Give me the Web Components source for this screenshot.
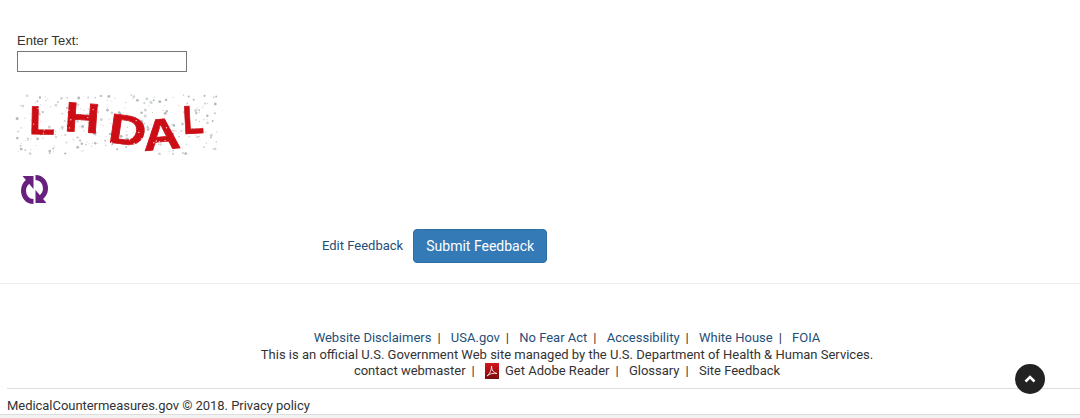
<!DOCTYPE html>
<html lang="en">
<head>
<meta charset="utf-8">
<title>Feedback</title>
<style>
	html, body { margin: 0; padding: 0; background: #fff; }
	body { font: 13px/17px Roboto, "Liberation Sans", sans-serif; color: #333; height: 418px; overflow: hidden; position: relative; }
</style>
</head>
<body>
	<feedback-form></feedback-form>
	<site-footer>
		<footer-row>
			<footer-link href="#" kind="link">Website Disclaimers</footer-link>
			<footer-link href="#" kind="link">USA.gov</footer-link>
			<footer-link href="#" kind="link">No Fear Act</footer-link>
			<footer-link href="#" kind="link">Accessibility</footer-link>
			<footer-link href="#" kind="link">White House</footer-link>
			<footer-link href="#" kind="link" last>FOIA</footer-link>
		</footer-row>
		<footer-row>This is an official U.S. Government Web site managed by the U.S. Department of Health &amp; Human Services.</footer-row>
		<footer-row>
			<footer-link href="#">contact webmaster</footer-link>
			<footer-link href="#" pdf>Get Adobe Reader</footer-link>
			<footer-link href="#">Glossary</footer-link>
			<footer-link href="#" last>Site Feedback</footer-link>
		</footer-row>
	</site-footer>
	<back-to-top></back-to-top>

<script>
const captchaTemplate = document.createElement('template')
captchaTemplate.innerHTML = `
	<style>
		:host { display: block; width: 200px; height: 60px; }
		svg { display: block; overflow: visible; }
		text { font: bold 40px "Liberation Sans", Arial, sans-serif; fill: #cd0e14; stroke: #cd0e14; stroke-width: .7px; }
	</style>
	<svg width="200" height="60" viewBox="0 0 200 60">
		<defs><filter id="soft" x="0" y="0" width="100%" height="100%"><feGaussianBlur stdDeviation="0.35"/></filter></defs>
		<g filter="url(#soft)">
			<g id="dots"></g>
			<text transform="translate(12 39) rotate(1) scale(1.05 1)">L</text>
			<text transform="translate(47 36) rotate(4) scale(1.2 1.05)">H</text>
			<text transform="translate(90 47) rotate(8) scale(1.3 1.05)">D</text>
			<text transform="translate(127 56) rotate(-5) scale(1.3 1.1)">A</text>
			<text transform="translate(166.500 39) rotate(-3) scale(.85 1)">L</text>
			<g id="over"></g>
		</g>
	</svg>
`

class CaptchaImage extends HTMLElement {
	constructor() {
		super()
		this.attachShadow({ mode: 'open' })
		this.shadowRoot.appendChild(captchaTemplate.content.cloneNode(true))
		// the noise of the captcha, always the same
		let seed = 41
		const rnd = () => (seed = (seed * 16807) % 2147483647) / 2147483647
		const ns = 'http://www.w3.org/2000/svg'
		const dots = this.shadowRoot.getElementById('dots')
		for (let i = 0; i < 260; i++) {
			const c = document.createElementNS(ns, 'circle')
			c.setAttribute('cx', (rnd() * 200).toFixed(1))
			c.setAttribute('cy', (rnd() * 60).toFixed(1))
			c.setAttribute('r', (0.4 + rnd() * 1.1).toFixed(1))
			c.setAttribute('fill', rnd() > .5 ? '#b3babd' : '#d0d4d6')
			dots.appendChild(c)
		}
		const over = this.shadowRoot.getElementById('over')
		for (let i = 0; i < 70; i++) {
			const c = document.createElementNS(ns, 'circle')
			c.setAttribute('cx', (12 + rnd() * 180).toFixed(1))
			c.setAttribute('cy', (10 + rnd() * 45).toFixed(1))
			c.setAttribute('r', '0.7')
			c.setAttribute('fill', '#f3d6d6')
			over.appendChild(c)
		}
	}
}

const feedbackTemplate = document.createElement('template')
feedbackTemplate.innerHTML = `
	<style>
		:host { display: block; padding: 32px 0 19px 17px; border-bottom: 1px solid #eee; height: 232px; }
		label { display: block; height: 19px; color: #333; font-family: "Liberation Sans", Arial, sans-serif; }
		input { display: block; box-sizing: border-box; width: 170px; height: 21px; margin: 0; padding: 0 2px; border: 1px solid #767676; background: #fff; }
		captcha-image { margin-top: 23px; }
		.refresh { display: block; width: 27px; height: 29px; margin: 20px 0 0 4px; }
		.refresh svg { display: block; }
		.actions { display: flex; align-items: center; gap: 10px; margin: 25px 0 0 305px; }
		.actions a { padding-bottom: 2px; }
		a { color: #1f4e79; text-decoration: none; }
		button { box-sizing: border-box; width: 134px; height: 34px; padding: 0; font: 14px Roboto, "Liberation Sans", sans-serif; color: #fff; background: #337ab7; border: 1px solid #2e6da4; border-radius: 4px; }
	</style>
	<label for="txt">Enter Text:</label>
	<input id="txt" type="text">
	<captcha-image></captcha-image>
	<a class="refresh" href="#" aria-label="Refresh">
		<svg width="27" height="29" viewBox="0 0 27 29">
			<g fill="none" stroke="#68207f" stroke-width="5">
				<path d="M12.500 26.500 C6 26.500 2.500 21 2.500 15.500 C2.500 11.500 4 9 7 6.500"/>
				<path d="M14.500 2.500 C21 2.500 24.500 8 24.500 13.500 C24.500 17.500 23 20 20 22.500"/>
			</g>
			<path fill="#68207f" d="M1.500 1 L12.500 1 L12.500 14 Z"/>
			<path fill="#68207f" d="M25.500 28 L14.500 28 L14.500 15 Z"/>
		</svg>
	</a>
	<div class="actions">
		<a href="#">Edit Feedback</a>
		<button type="button">Submit Feedback</button>
	</div>
`

class FeedbackForm extends HTMLElement {
	constructor() {
		super()
		this.attachShadow({ mode: 'open' })
		this.shadowRoot.appendChild(feedbackTemplate.content.cloneNode(true))
	}
}

const footerTemplate = document.createElement('template')
footerTemplate.innerHTML = `
	<style>
		:host { display: block; padding-top: 45px; }
		.links { padding: 0 0 9px 54px; text-align: center; }
		.copy { margin-left: 7px; padding-top: 8px; height: 17px; border-top: 1px solid #ddd; color: #333; letter-spacing: -.04px; }
		.copy a { color: inherit; text-decoration: none; }
		.band { height: 4px; margin-top: 0; background: #f2f2f2; border-top: 1px solid #ddd; box-sizing: border-box; }
	</style>
	<div class="links"><slot></slot></div>
	<div class="copy">MedicalCountermeasures.gov © 2018. <a href="#">Privacy policy</a></div>
	<div class="band"></div>
`

class SiteFooter extends HTMLElement {
	constructor() {
		super()
		this.attachShadow({ mode: 'open' })
		this.shadowRoot.appendChild(footerTemplate.content.cloneNode(true))
	}
}

class FooterRow extends HTMLElement {
	constructor() {
		super()
		this.attachShadow({ mode: 'open' })
		this.shadowRoot.innerHTML = `
			<style>:host { display: block; height: 16.5px; line-height: 17px; white-space: nowrap; }</style>
			<slot></slot>
		`
	}
}

class FooterLink extends HTMLElement {
	constructor() {
		super()
		this.attachShadow({ mode: 'open' })
		const color = this.getAttribute('kind') === 'link' ? '#1f4e79' : '#333'
		const pdf = this.hasAttribute('pdf') ? `
			<svg width="14" height="16" viewBox="0 0 14 16">
				<defs><linearGradient id="g" x1="0" y1="0" x2="0" y2="1"><stop offset="0" stop-color="#d5151b"/><stop offset="1" stop-color="#7a0a0e"/></linearGradient></defs>
				<rect width="14" height="16" fill="url(#g)"/>
				<path fill="none" stroke="#fff" stroke-width=".8" d="M2 13 C5 10.500 6.500 7 6.500 3 C6.500 7 8.500 10 12 10.500 C8 10 5 10.500 2 13 Z"/>
			</svg>` : ''
		const sep = this.hasAttribute('last') ? '' : '<span class="sep">|</span>'
		this.shadowRoot.innerHTML = `
			<style>
				:host { display: inline; }
				a { color: ${color}; text-decoration: none; }
				svg { vertical-align: -4px; margin-right: 6px; }
				.sep { color: #333; margin: 0 7px 0 6px; }
			</style>
			${pdf}<a href="${this.getAttribute('href')}"><slot></slot></a>${sep}
		`
	}
}

class BackToTop extends HTMLElement {
	constructor() {
		super()
		this.attachShadow({ mode: 'open' })
		this.shadowRoot.innerHTML = `
			<style>
				:host { position: absolute; left: 1015px; top: 364px; width: 30px; height: 30px; }
				a { display: flex; align-items: center; justify-content: center; width: 30px; height: 30px; border-radius: 50%; background: #222; }
			</style>
			<a href="#" aria-label="Back to top">
				<svg width="12" height="8" viewBox="0 0 12 8"><path d="M1.500 6.500 L6 2 L10.500 6.500" fill="none" stroke="#fff" stroke-width="2.600"/></svg>
			</a>
		`
	}
}

window.customElements.define('captcha-image', CaptchaImage)
window.customElements.define('feedback-form', FeedbackForm)
window.customElements.define('site-footer', SiteFooter)
window.customElements.define('footer-row', FooterRow)
window.customElements.define('footer-link', FooterLink)
window.customElements.define('back-to-top', BackToTop)
</script>
</body>
</html>
